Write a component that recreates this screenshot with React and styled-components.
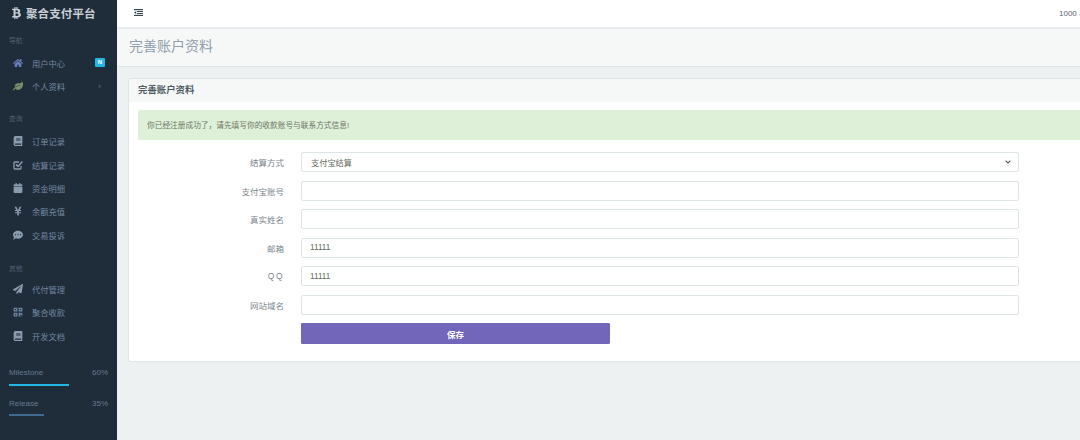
import React from "react";
import styled, { createGlobalStyle } from "styled-components";
import {
  FaBtc,
  FaHome,
  FaLeaf,
  FaBook,
  FaCalendar,
  FaYenSign,
  FaCommentDots,
  FaPaperPlane,
  FaQrcode,
  FaChevronDown,
} from "react-icons/fa";

const Global = createGlobalStyle`
  html, body {
    margin: 0;
    padding: 0;
    height: 440px;
    overflow: hidden;
    background: #edf1f2;
    font-family: "Liberation Sans", "Noto Sans CJK SC", sans-serif;
  }
  * { box-sizing: border-box; }
`;

const Layout = styled.div`
  display: flex;
  width: 1080px;
  height: 440px;
  overflow: hidden;
`;

const Sidebar = styled.aside`
  width: 117px;
  flex: none;
  background: #1f2d3a;
  font-size: 8.25px;
`;

const Brand = styled.div`
  height: 26px;
  display: flex;
  align-items: center;
  padding-left: 12px;
  gap: 5px;
  color: #c9d0d6;
  font-size: 11.5px;
  font-weight: 700;
  letter-spacing: 0.1px;
  svg { width: 9px; height: 12px; }
`;

const NavTitle = styled.div`
  height: 14px;
  margin: ${(p) => p.$top}px 0 ${(p) => p.$bottom}px;
  padding-left: 9px;
  line-height: 14px;
  font-size: 6.8px;
  color: #4f6072;
`;

const NavItem = styled.div`
  height: 23.35px;
  display: flex;
  align-items: center;
  padding-left: 13px;
  color: #7587a0;
  svg { width: 10px; height: 10px; color: ${(p) => p.$icon || "#8a9bad"}; flex: none; }
`;

const NavLabel = styled.span`
  margin-left: 9px;
  flex: 1;
`;

const Badge = styled.span`
  width: 10px;
  height: 9px;
  margin-right: 12px;
  border-radius: 1px;
  background: #23b7e5;
  color: #fff;
  font-size: 6px;
  font-weight: 700;
  line-height: 9px;
  text-align: center;
`;

const Arrow = styled.span`
  margin-right: 16px;
  font-size: 9px;
  color: #5f7186;
`;

const Progress = styled.div`
  padding: 0 9px;
  margin-top: ${(p) => p.$top}px;
`;

const ProgressHead = styled.div`
  display: flex;
  justify-content: space-between;
  font-size: 8px;
  line-height: 12px;
  color: #66788e;
`;

const Track = styled.div`
  height: 2px;
  margin-top: ${(p) => p.$gap}px;
  background: ${(p) => p.$color};
`;

const Main = styled.main`
  width: 963px;
  flex: none;
  overflow: hidden;
`;

const Topbar = styled.header`
  height: 29px;
  display: flex;
  align-items: center;
  justify-content: space-between;
  padding: 0 0 3px 17px;
  background: #fff;
  border-bottom: 2px solid #e8ecee;
`;

const TopUser = styled.span`
  font-size: 8px;
  color: #58666e;
  white-space: nowrap;
  width: 21px;
  overflow: hidden;
`;

const TitleBar = styled.div`
  height: 38px;
  padding: 0 0 5px 12px;
  display: flex;
  align-items: center;
  background: #f6f8f8;
  border-bottom: 1px solid #dee5e7;
  font-size: 14px;
  color: #8f9fac;
`;

const Content = styled.div`
  padding: 11px 0 0 11px;
  width: 1000px;
`;

const Panel = styled.section`
  height: 284px;
  background: #fff;
  border: 1px solid #dee5e7;
  border-radius: 2px;
`;

const PanelHead = styled.div`
  height: 23px;
  padding: 0 0 3px 9px;
  display: flex;
  align-items: center;
  background: #f6f8f8;
  font-size: 9.4px;
  font-weight: 700;
  color: #4d5a62;
`;

const Alert = styled.div`
  height: 30px;
  margin: 8px 0 12px 9px;
  padding: 0 0 1px 9px;
  display: flex;
  align-items: center;
  background: #dff0d8;
  border-radius: 2px;
  font-size: 7.7px;
  color: #6b7566;
`;

const Form = styled.form`
  display: grid;
  grid-template-columns: 155px 717.5px;
  column-gap: 17px;
  row-gap: 8.5px;
  align-items: center;
`;

const Label = styled.label`
  text-align: right;
  font-size: 8.5px;
  color: #7b858d;
  letter-spacing: ${(p) => (p.$wide ? "1.5px" : "0")};
`;

const Field = styled.div`
  height: 20px;
  padding: 0 7px 0 ${(p) => (p.$select ? 9 : 8)}px;
  display: flex;
  align-items: center;
  justify-content: space-between;
  background: #fff;
  border: 1px solid #dee5e7;
  border-radius: 2px;
  font-size: 8.2px;
  color: #5f6d5a;
  svg { width: 6px; height: 6px; color: #39454d; }
`;

const Save = styled.button`
  grid-column: 2;
  width: 309px;
  height: 21px;
  padding: 0;
  border: 1px solid #7266ba;
  border-radius: 1px;
  background: #7266ba;
  color: #fff;
  font: 700 8.5px "Liberation Sans", "Noto Sans CJK SC", sans-serif;
`;

const MenuIcon = () => (
  <svg width="9" height="7" viewBox="0 0 9 7" fill="#3a4a55">
    <rect x="0" y="0" width="9" height="1.2" />
    <rect x="3" y="2" width="6" height="1" />
    <rect x="3" y="4" width="6" height="1" />
    <rect x="0" y="5.8" width="9" height="1.2" />
    <path d="M2.2 2 L0 3.5 L2.2 5 Z" />
  </svg>
);

const CheckEdit = () => (
  <svg viewBox="0 0 10 10" fill="none" stroke="currentColor" strokeWidth="1.3">
    <path d="M8 6v2.2a.8.8 0 0 1-.8.8H1.8a.8.8 0 0 1-.8-.8V2.8a.8.8 0 0 1 .8-.8H6" />
    <path d="M3 4.4 L5 6.4 L9.4 1.6" strokeWidth="1.5" />
  </svg>
);

const navGroups = [
  {
    title: "导航",
    top: 8,
    bottom: 3,
    items: [
      { icon: <FaHome />, color: "#6b7dc0", label: "用户中心", badge: "N" },
      { icon: <FaLeaf />, color: "#7c8f6a", label: "个人资料", arrow: true },
    ],
  },
  {
    title: "查询",
    top: 14,
    bottom: 4,
    items: [
      { icon: <FaBook />, label: "订单记录" },
      { icon: <CheckEdit />, label: "结算记录" },
      { icon: <FaCalendar />, label: "资金明细" },
      { icon: <FaYenSign />, label: "余额充值" },
      { icon: <FaCommentDots />, label: "交易投诉" },
    ],
  },
  {
    title: "其他",
    top: 15.5,
    bottom: 1.5,
    items: [
      { icon: <FaPaperPlane />, label: "代付管理" },
      { icon: <FaQrcode />, color: "#6f86a3", label: "聚合收款" },
      { icon: <FaBook />, label: "开发文档" },
    ],
  },
];

const fields = [
  { label: "支付宝账号", value: "" },
  { label: "真实姓名", value: "" },
  { label: "邮箱", value: "11111" },
  { label: "QQ", value: "11111", wide: true },
  { label: "网站域名", value: "" },
];

export default function App() {
  return (
    <>
      <Global />
      <Layout>
        <Sidebar>
          <Brand>
            <FaBtc />
            聚合支付平台
          </Brand>
          {navGroups.map((group) => (
            <div key={group.title}>
              <NavTitle $top={group.top} $bottom={group.bottom}>
                {group.title}
              </NavTitle>
              {group.items.map((item) => (
                <NavItem key={item.label} $icon={item.color}>
                  {item.icon}
                  <NavLabel>{item.label}</NavLabel>
                  {item.badge && <Badge>{item.badge}</Badge>}
                  {item.arrow && <Arrow>›</Arrow>}
                </NavItem>
              ))}
            </div>
          ))}
          <Progress $top={20}>
            <ProgressHead>
              <span>Milestone</span>
              <span>60%</span>
            </ProgressHead>
            <Track $color="#23b7e5" $gap={5} style={{ width: "60px" }} />
          </Progress>
          <Progress $top={12}>
            <ProgressHead>
              <span>Release</span>
              <span>35%</span>
            </ProgressHead>
            <Track $color="#3f6a92" $gap={4} style={{ width: "35px" }} />
          </Progress>
        </Sidebar>
        <Main>
          <Topbar>
            <MenuIcon />
            <TopUser>1000 - 用户</TopUser>
          </Topbar>
          <TitleBar>完善账户资料</TitleBar>
          <Content>
            <Panel>
              <PanelHead>完善账户资料</PanelHead>
              <Alert>你已经注册成功了，请先填写你的收款账号与联系方式信息!</Alert>
              <Form>
                <Label>结算方式</Label>
                <Field $select>
                  支付宝结算
                  <FaChevronDown />
                </Field>
                {fields.map((f) => (
                  <React.Fragment key={f.label}>
                    <Label $wide={f.wide}>{f.label}</Label>
                    <Field>{f.value}</Field>
                  </React.Fragment>
                ))}
                <Save type="button">保存</Save>
              </Form>
            </Panel>
          </Content>
        </Main>
      </Layout>
    </>
  );
}
